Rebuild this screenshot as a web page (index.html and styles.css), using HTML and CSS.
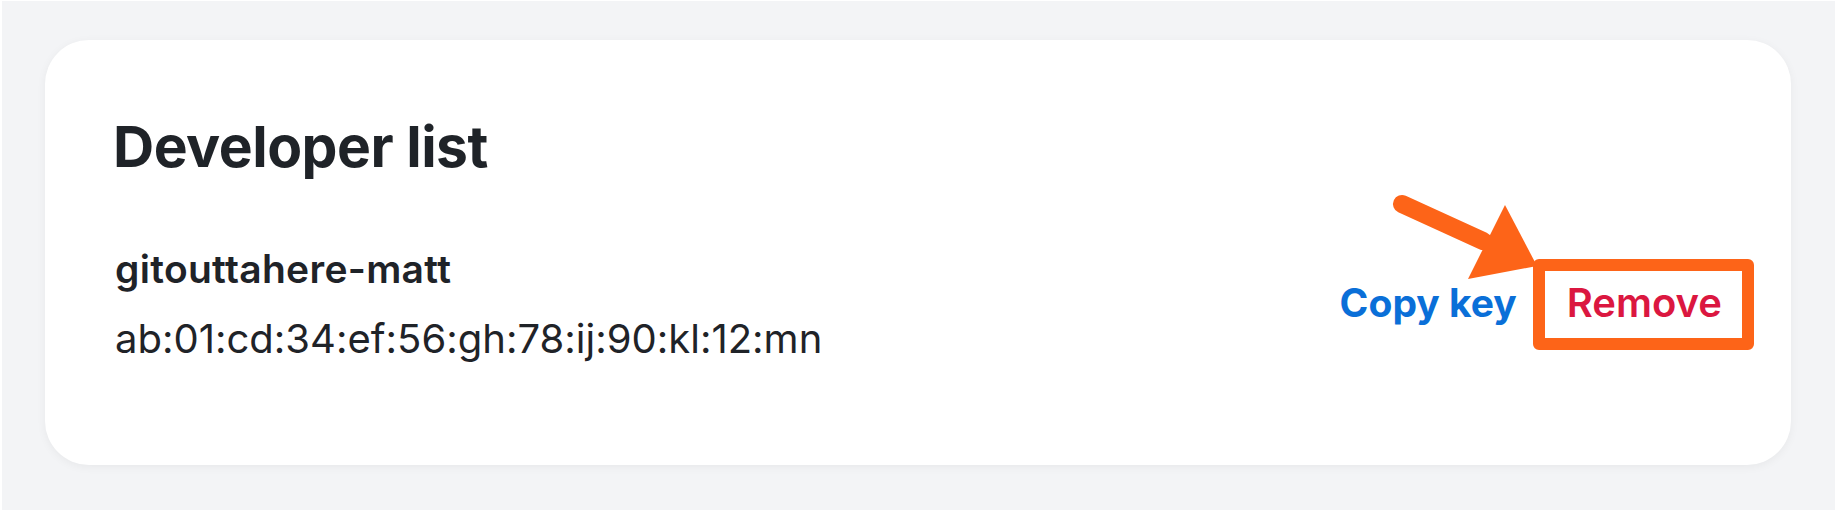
FILE: index.html
```html
<!DOCTYPE html>
<html lang="en">
<head>
<meta charset="utf-8">
<title>Developer list</title>
<link rel="stylesheet" href="styles.css">
</head>
<body>
<div class="page">
  <section class="card">
    <h1 class="title">Developer list</h1>
    <div class="row">
      <div class="dev">
        <div class="dev-name">gitouttahere-matt</div>
        <div class="dev-key">ab:01:cd:34:ef:56:gh:78:ij:90:kl:12:mn</div>
      </div>
      <div class="actions">
        <button class="link link-blue" type="button">Copy key</button>
        <span class="remove-wrap">
          <button class="link link-red" type="button">Remove</button>
          <span class="highlight" aria-hidden="true"></span>
          <svg class="arrow" width="160" height="100" viewBox="0 0 160 100" aria-hidden="true">
            <line x1="17" y1="15" x2="98" y2="52" stroke="#fd6418" stroke-width="18" stroke-linecap="round"/>
            <polygon points="120,16 152,77 83,90" fill="#fd6418"/>
          </svg>
        </span>
      </div>
    </div>
  </section>
</div>
</body>
</html>
```

FILE: styles.css
```css
* { box-sizing: border-box; }
html, body { margin: 0; padding: 0; background: #ffffff; }
body {
  font-family: Inter, "Noto Sans", "Liberation Sans", sans-serif;
  color: #1f2328;
}
.page {
  margin: 1px 0 1px 2px;
  height: 509px;
  background: #f3f4f6;
  padding: 39px 44px 0 43px;
}
.card {
  position: relative;
  height: 425px;
  background: #ffffff;
  border-radius: 44px;
  box-shadow: 0 2px 10px rgba(0, 0, 0, 0.05);
  padding: 73px 69px 0 70px;
}
.title {
  margin: 0 0 0 -2px;
  font-size: 57px;
  line-height: 1.2;
  font-weight: 700;
  letter-spacing: -0.5px;
}
.row {
  display: flex;
  align-items: center;
  justify-content: space-between;
  margin-top: 64px;
}
.dev-name {
  font-size: 39px;
  line-height: 48px;
  font-weight: 600;
  letter-spacing: 0.3px;
}
.dev-key {
  margin-top: 22px;
  font-size: 40px;
  line-height: 48px;
  font-weight: 400;
}
.actions {
  display: flex;
  align-items: center;
  gap: 50px;
  margin-bottom: 3px;
}
.link {
  border: 0;
  background: none;
  padding: 0;
  font-family: inherit;
  font-size: 39px;
  line-height: 48px;
  font-weight: 700;
  cursor: pointer;
}
.link-blue { color: #0a6fd8; }
.link-red { color: #db1740; font-weight: 600; font-size: 40px; }
.remove-wrap { position: relative; display: inline-block; }
.highlight {
  position: absolute;
  left: -34px;
  right: -32px;
  top: -20px;
  bottom: -23px;
  border: 12px solid #fd6418;
  border-radius: 6px;
  pointer-events: none;
}
.arrow {
  position: absolute;
  left: -182px;
  top: -90px;
  pointer-events: none;
}
```
